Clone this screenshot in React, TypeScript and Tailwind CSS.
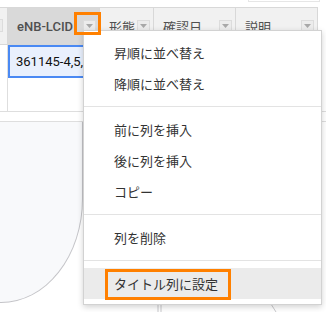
import React from "react";

const jp = { fontFamily: '"Noto Sans CJK JP", "Noto Sans", sans-serif' };

function DropBtn() {
  return (
    <div className="w-[13px] h-[13px] shrink-0 border border-[#dcdcdc] bg-[#ececec] flex items-center justify-center">
      <svg width="7" height="4" viewBox="0 0 7 4">
        <path d="M0 0 L7 0 L3.5 4 Z" fill="#a8a8a8" />
      </svg>
    </div>
  );
}

function HeaderCell({ label, w, active, jpText }: { label: string; w: number; active?: boolean; jpText?: boolean }) {
  return (
    <div
      className={`h-full flex items-center justify-between pl-[9px] pr-[3px] border-r border-[#d8d8d8] ${active ? "bg-[#d9d9d9]" : "bg-[#f1f1f1]"}`}
      style={{ width: w }}
    >
      <span
        className={`text-[13px] text-[#505050] leading-none ${jpText ? "font-normal" : "font-medium"}`}
        style={jpText ? jp : undefined}
      >
        {label}
      </span>
      <DropBtn />
    </div>
  );
}

function Item({ children, hi }: { children: React.ReactNode; hi?: boolean }) {
  return (
    <div className={`h-[31px] flex items-center pl-[30px] text-[13px] text-[#333333] ${hi ? "bg-[#ebebeb]" : ""}`} style={jp}>
      {children}
    </div>
  );
}

function Divider() {
  return <div className="h-px bg-[#e3e3e3] my-[7px]" />;
}

export default function App() {
  return (
    <div className="relative w-[326px] h-[312px] overflow-hidden bg-white" style={{ fontFamily: "Roboto, sans-serif" }}>
      {/* top strip */}
      <div className="h-[7px] flex">
        <div className="ml-[248px] w-[72px] h-[2px] border-b border-x border-[#e6e6e6]" />
      </div>

      {/* header row */}
      <div className="h-[38px] w-[318px] flex border-t border-b border-[#d8d8d8]">
        <div className="w-[8px] h-full bg-[#f1f1f1] border-r border-[#d8d8d8] relative overflow-hidden flex items-center">
          <div className="absolute left-[-10px] top-[11px]">
            <DropBtn />
          </div>
        </div>
        <HeaderCell label="eNB-LCID" w={92} active />
        <HeaderCell label="形態" w={54} jpText />
        <HeaderCell label="確認日" w={82} jpText />
        <HeaderCell label="説明" w={82} jpText />
      </div>

      {/* data rows */}
      <div className="h-[67px] flex border-b border-[#dedede]">
        <div className="w-[8px] h-full border-r border-[#dedede]" />
        <div className="flex-1 flex flex-col">
          <div className="h-[33px] w-[100px] border-2 border-[#4a89f3] bg-[#e9f0fd] flex items-center pl-[6px] text-[13px] text-[#111111] whitespace-nowrap overflow-hidden">
            361145-4,5,6
          </div>
        </div>
      </div>

      {/* scrollbar band */}
      <div className="h-[10px] border-b border-[#dedede]" />

      {/* lower area */}
      <div className="flex">
        <div className="w-[83px] h-[181px] bg-[#f8f9fb] border-r border-b border-[#c4c4c8] rounded-br-[82px_104px]" />
      </div>

      {/* faint marks at bottom */}
      <svg className="absolute left-[155px] top-[304px]" width="10" height="8" viewBox="0 0 10 8">
        <path d="M3 0 L3 8 M6 0 L6 8" stroke="#c9c9cc" strokeWidth="1" />
      </svg>
      <svg className="absolute left-[270px] top-[304px]" width="8" height="8" viewBox="0 0 8 8">
        <path d="M1 0 L6 8" stroke="#c9c9cc" strokeWidth="1" />
      </svg>

      {/* context menu */}
      <div className="absolute left-[83px] top-[30px] w-[239px] h-[275px] bg-white border border-[#d2d2d2] shadow-[0_2px_6px_rgba(0,0,0,0.18)] pt-[6px]">
        <Item>昇順に並べ替え</Item>
        <Item>降順に並べ替え</Item>
        <Divider />
        <Item>前に列を挿入</Item>
        <Item>後に列を挿入</Item>
        <Item>コピー</Item>
        <Divider />
        <Item>列を削除</Item>
        <Divider />
        <Item hi>タイトル列に設定</Item>
      </div>

      {/* orange highlight boxes */}
      <div className="absolute left-[74px] top-[12px] w-[27px] h-[23px] border-[3px] border-[#ff8000]" />
      <div className="absolute left-[105px] top-[269px] w-[126px] h-[31px] border-[3px] border-[#ff8000]" />
    </div>
  );
}
